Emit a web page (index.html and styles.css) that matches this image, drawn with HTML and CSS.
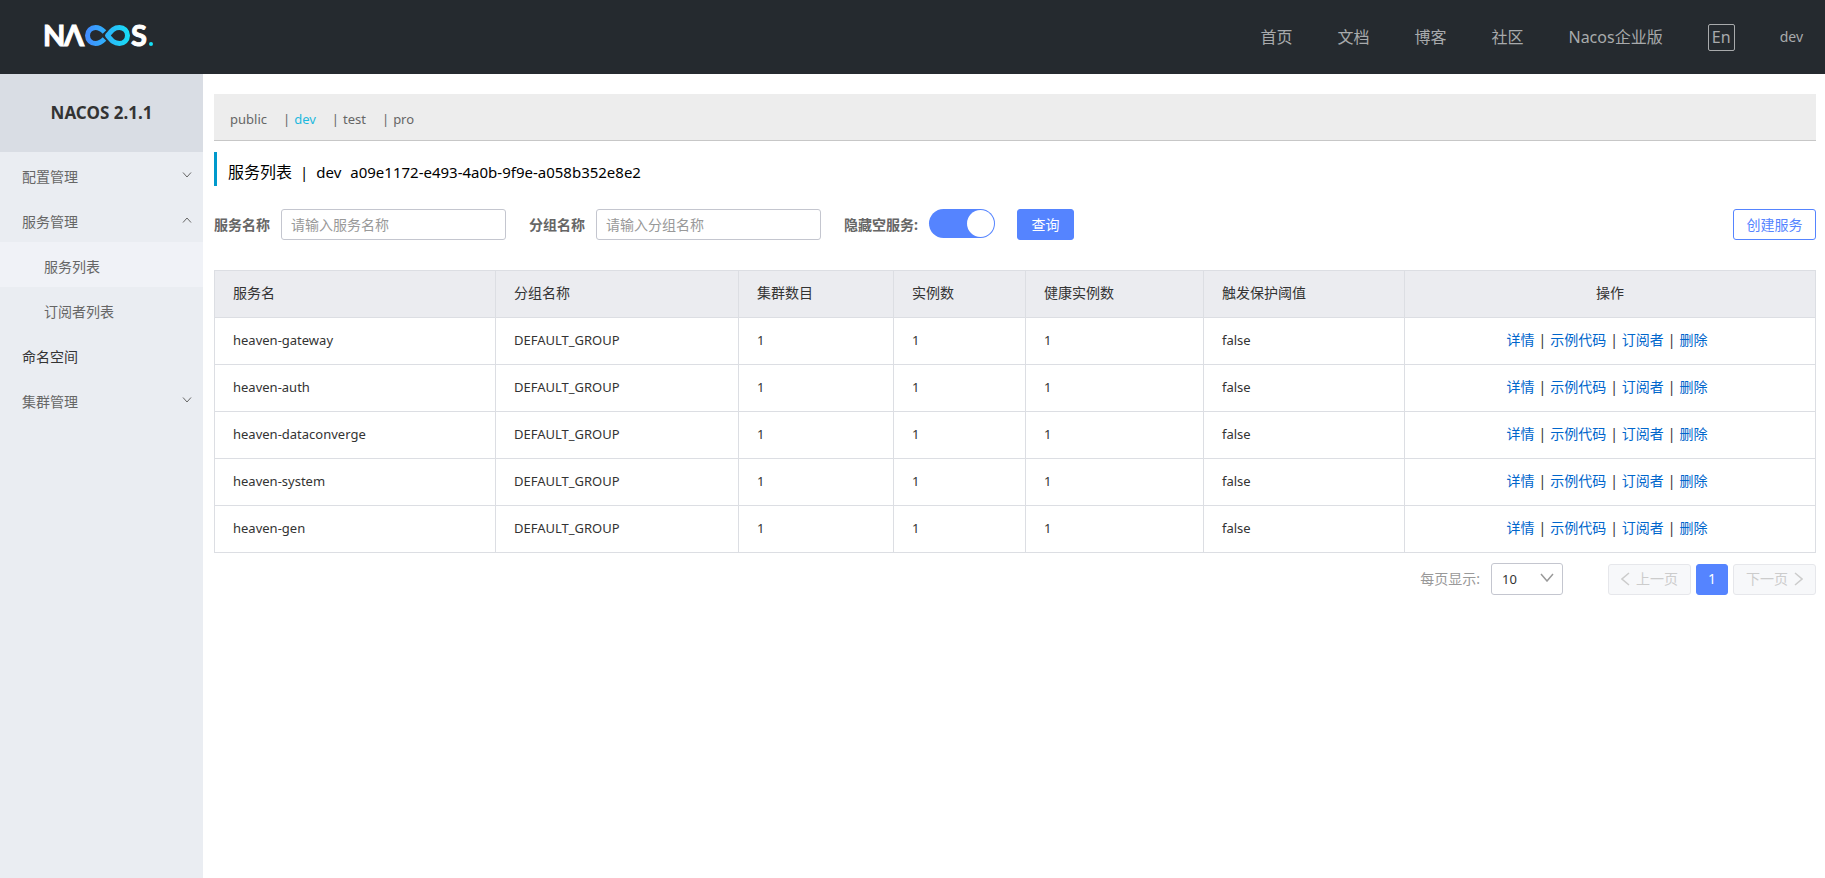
FILE: index.html
```html
<!DOCTYPE html>
<html lang="zh-CN">
<head>
<meta charset="utf-8">
<title>Nacos</title>
<link rel="stylesheet" href="styles.css">
</head>
<body>
<header class="topbar">
  <a class="logo" href="#" aria-label="Nacos">
    <svg width="110" height="40" viewBox="0 -7 110 40">
      <defs>
        <linearGradient id="loop" x1="41" y1="0" x2="86" y2="0" gradientUnits="userSpaceOnUse">
          <stop offset="0" stop-color="#4489ff"/>
          <stop offset="1" stop-color="#16e0f5"/>
        </linearGradient>
      </defs>
      <text class="logo-text" x="-1" y="22">N</text>
      <text class="logo-text" x="20" y="22">Λ</text>
      <path d="M60.500 8 C57 4.500 55 3.500 51.500 3.500 A8 8 0 0 0 51.500 19.500 C55 19.500 57 18.500 60.500 15" fill="none" stroke="url(#loop)" stroke-width="5"/>
      <path d="M63.500 11.500 C68 6 70 3.500 75.500 3.500 A8 8 0 0 1 75.500 19.500 C70 19.500 68 17 63.500 11.500 Z" fill="none" stroke="url(#loop)" stroke-width="5" stroke-linejoin="round"/>
      <text class="logo-text" x="87" y="22">S</text>
      <circle cx="107" cy="20" r="2" fill="#16e0f5"/>
    </svg>
  </a>
  <nav class="nav">
    <a href="#">首页</a>
    <a href="#">文档</a>
    <a href="#">博客</a>
    <a href="#">社区</a>
    <a href="#">Nacos企业版</a>
    <button class="lang" type="button">En</button>
    <a class="user" href="#">dev</a>
  </nav>
</header>
<div class="layout">
  <aside class="sidebar">
    <h1 class="version">NACOS 2.1.1</h1>
    <ul class="menu">
      <li><a href="#">配置管理<svg class="chev" viewBox="0 0 10 6"><path d="M1 .5 5 5 9 .5"/></svg></a></li>
      <li><a href="#">服务管理<svg class="chev" viewBox="0 0 10 6"><path d="M1 5.500 5 1 9 5.500"/></svg></a></li>
      <li><a class="sub active" href="#">服务列表</a></li>
      <li><a class="sub" href="#">订阅者列表</a></li>
      <li><a class="dark" href="#">命名空间</a></li>
      <li><a href="#">集群管理<svg class="chev" viewBox="0 0 10 6"><path d="M1 .5 5 5 9 .5"/></svg></a></li>
    </ul>
  </aside>
  <main class="main">
    <div class="spaces">
      <a href="#">public</a>
      <span>|</span><a class="current" href="#">dev</a>
      <span>|</span><a href="#">test</a>
      <span>|</span><a href="#">pro</a>
    </div>
    <h2 class="title"><span>服务列表</span><span class="bar">|</span><span class="latin">dev</span><span class="latin">a09e1172-e493-4a0b-9f9e-a058b352e8e2</span></h2>
    <form class="filters">
      <label for="svc">服务名称</label>
      <input class="text" id="svc" type="text" placeholder="请输入服务名称">
      <label for="grp">分组名称</label>
      <input class="text" id="grp" type="text" placeholder="请输入分组名称">
      <label for="hide">隐藏空服务:</label>
      <input class="switch" id="hide" type="checkbox" role="switch" checked>
      <button class="btn primary" type="button">查询</button>
      <button class="btn outline" type="button">创建服务</button>
    </form>
    <table class="grid">
      <colgroup><col class="c1"><col class="c2"><col class="c3"><col class="c4"><col class="c5"><col class="c6"><col class="c7"></colgroup>
      <thead>
        <tr><th>服务名</th><th>分组名称</th><th>集群数目</th><th>实例数</th><th>健康实例数</th><th>触发保护阈值</th><th class="ops-head">操作</th></tr>
      </thead>
      <tbody>
        <tr><td>heaven-gateway</td><td>DEFAULT_GROUP</td><td>1</td><td>1</td><td>1</td><td>false</td><td class="ops"><a href="#">详情</a><span>|</span><a href="#">示例代码</a><span>|</span><a href="#">订阅者</a><span>|</span><a href="#">删除</a></td></tr>
        <tr><td>heaven-auth</td><td>DEFAULT_GROUP</td><td>1</td><td>1</td><td>1</td><td>false</td><td class="ops"><a href="#">详情</a><span>|</span><a href="#">示例代码</a><span>|</span><a href="#">订阅者</a><span>|</span><a href="#">删除</a></td></tr>
        <tr><td>heaven-dataconverge</td><td>DEFAULT_GROUP</td><td>1</td><td>1</td><td>1</td><td>false</td><td class="ops"><a href="#">详情</a><span>|</span><a href="#">示例代码</a><span>|</span><a href="#">订阅者</a><span>|</span><a href="#">删除</a></td></tr>
        <tr><td>heaven-system</td><td>DEFAULT_GROUP</td><td>1</td><td>1</td><td>1</td><td>false</td><td class="ops"><a href="#">详情</a><span>|</span><a href="#">示例代码</a><span>|</span><a href="#">订阅者</a><span>|</span><a href="#">删除</a></td></tr>
        <tr><td>heaven-gen</td><td>DEFAULT_GROUP</td><td>1</td><td>1</td><td>1</td><td>false</td><td class="ops"><a href="#">详情</a><span>|</span><a href="#">示例代码</a><span>|</span><a href="#">订阅者</a><span>|</span><a href="#">删除</a></td></tr>
      </tbody>
    </table>
    <div class="pager">
      <label for="size">每页显示:</label>
      <div class="select-wrap">
        <select id="size"><option>10</option><option>20</option></select>
        <svg class="arrow" viewBox="0 0 14 9"><path d="M1 1 7 8 13 1"/></svg>
      </div>
      <div class="pages">
        <button class="page" type="button" disabled><svg viewBox="0 0 9 14"><path d="M8 1 1 7 8 13"/></svg>上一页</button>
        <button class="page on" type="button">1</button>
        <button class="page" type="button" disabled>下一页<svg viewBox="0 0 9 14"><path d="M1 1 8 7 1 13"/></svg></button>
      </div>
    </div>
  </main>
</div>
</body>
</html>
```
FILE: styles.css
```css
* { box-sizing: border-box; }
body {
  margin: 0;
  min-height: 100vh;
  display: flex;
  flex-direction: column;
  background: #fff;
  color: #333;
  font: 14px/20px "Noto Sans", "Noto Sans CJK SC", sans-serif;
}
a { color: inherit; text-decoration: none; }
button, input, select { font: inherit; margin: 0; }

.topbar {
  height: 74px;
  padding: 0 22px 0 44px;
  display: flex;
  align-items: center;
  justify-content: space-between;
  background: #252a2f;
}
.logo { display: flex; }
.logo svg { overflow: visible; }
.logo-text { font: 700 29px Lato, sans-serif; fill: #fff; stroke: #fff; stroke-width: 1px; }
.nav { display: flex; align-items: center; gap: 45px; color: #a8aaac; font-size: 16px; }
.lang {
  width: 27px;
  height: 27px;
  padding: 0;
  border: 1px solid #a8aaac;
  border-radius: 2px;
  background: none;
  color: inherit;
  line-height: 22px;
}
.user { font-size: 14px; }

.layout { flex: 1; display: flex; }
.sidebar { width: 203px; flex: none; background: #eaedf2; }
.version {
  margin: 0;
  height: 78px;
  background: #d9dde4;
  font-size: 17px;
  line-height: 78px;
  text-align: center;
}
.menu { margin: 0; padding: 0; list-style: none; }
.menu a {
  height: 45px;
  padding: 4px 11px 0 22px;
  display: flex;
  align-items: center;
  justify-content: space-between;
  color: #666;
}
.menu .sub { padding-left: 44px; }
.menu .active { background: #f0f2f7; }
.menu .dark { color: #333; }
.chev { width: 10px; height: 6px; margin-bottom: 4px; }
.chev path, .arrow path, .page path { fill: none; stroke: currentColor; }

.main { flex: 1; min-width: 0; padding: 20px 9px 20px 11px; }
.spaces {
  height: 47px;
  padding: 4px 16px 0;
  display: flex;
  align-items: center;
  border-bottom: 1px solid #c7c7c7;
  background: #ededed;
  color: #666;
  font-size: 13px;
}
.spaces span { margin: 0 4px 0 16px; }
.spaces .current { color: #1db9de; }
.title {
  margin: 11px 0 23px;
  height: 34px;
  padding: 6px 0 0 11px;
  display: flex;
  align-items: center;
  border-left: 3px solid #09c;
  color: #000;
  font-size: 16px;
  font-weight: 400;
}
.title .bar { margin: 0 8px; font-size: 15px; }
.title .latin { margin-right: 9px; font-size: 15px; }

.filters { display: flex; align-items: center; }
.filters label { margin-right: 11px; color: #666; font-weight: 700; }
.text {
  width: 225px;
  height: 31px;
  margin-right: 23px;
  padding: 0 9px;
  border: 1px solid #c4c6cf;
  border-radius: 3px;
}
.text::placeholder { color: #999; }
.switch {
  appearance: none;
  width: 66px;
  height: 29px;
  margin: 0 22px 2px 0;
  padding: 1px;
  display: flex;
  justify-content: flex-end;
  border-radius: 15px;
  background: #5584ff;
}
.switch::before { content: ""; width: 27px; height: 27px; border-radius: 50%; background: #fff; }
.btn { height: 31px; padding: 0; border: 1px solid #5584ff; border-radius: 3px; }
.primary { width: 57px; background: #5584ff; color: #fff; }
.outline { width: 83px; margin-left: auto; background: #fff; color: #5584ff; }

.grid {
  width: 100%;
  margin-top: 30px;
  border-collapse: collapse;
  table-layout: fixed;
  font-size: 13px;
}
.grid th, .grid td { height: 47px; padding: 0 0 2px 18px; border: 1px solid #dcdee3; text-align: left; }
.grid th { background: #ebecf0; font-size: 14px; font-weight: 400; }
.c1 { width: 281px; }
.c2 { width: 243px; }
.c3 { width: 155px; }
.c4 { width: 132px; }
.c5 { width: 178px; }
.c6 { width: 201px; }
.grid .ops-head { padding: 0 0 2px; text-align: center; }
.grid .ops { padding: 0 6px 2px 0; color: #06c; font-size: 14px; text-align: center; }
.ops span { margin: 0 4px; color: #333; }

.pager { margin-top: 10px; display: flex; justify-content: flex-end; align-items: center; color: #999; }
.select-wrap { position: relative; margin: 0 45px 0 11px; }
.select-wrap select {
  appearance: none;
  display: block;
  width: 72px;
  height: 32px;
  padding: 0 10px;
  border: 1px solid #c4c6cf;
  border-radius: 3px;
  background: #fff;
  color: #333;
  font-size: 13px;
}
.arrow { position: absolute; right: 9px; top: 10px; width: 14px; height: 9px; }
.pages { display: flex; gap: 5px; }
.page {
  width: 83px;
  height: 31px;
  padding: 0;
  display: flex;
  align-items: center;
  justify-content: center;
  gap: 6px;
  border: 1px solid #e6e7eb;
  border-radius: 3px;
  background: #f7f8fa;
  color: #ccc;
}
.page svg { width: 9px; height: 14px; }
.page.on { width: 32px; border-color: #5584ff; background: #5584ff; color: #fff; }
.page path, .arrow path { stroke-width: 1.5px; }
```
